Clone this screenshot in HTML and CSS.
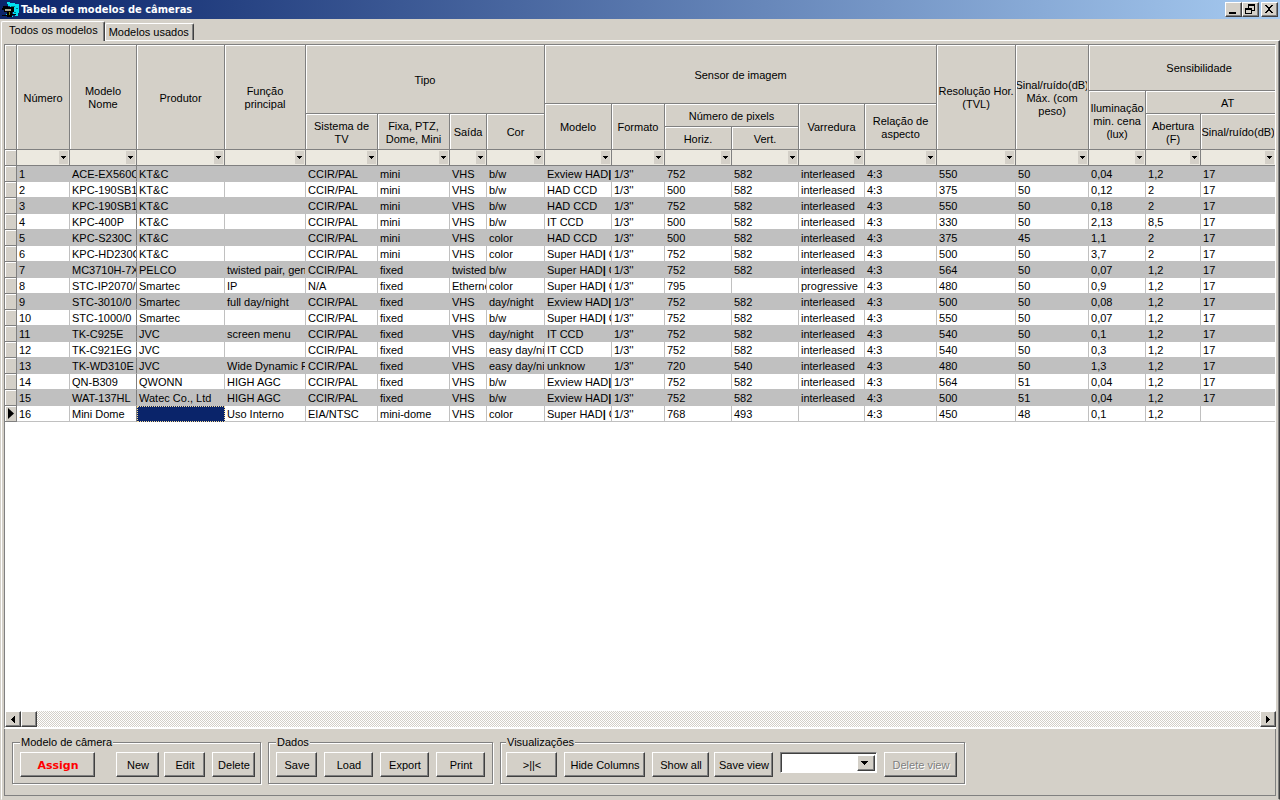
FILE: index.html
```html
<!DOCTYPE html>
<html lang="pt-BR">
<head>
<meta charset="utf-8">
<title>Tabela de modelos de câmeras</title>
<link rel="stylesheet" href="styles.css">
</head>
<body>
<header class="titlebar">
  <svg class="app-icon" width="18" height="18" viewBox="0 0 18 18" aria-hidden="true" shape-rendering="crispEdges">
    <path fill="#00e0f0" d="M5 1h3v1h5v1h4v9h-1v3h-3v-2h-2V9H8V5H6V3H5z"/>
    <path fill="#008080" d="M9 5h4v1H9zM14 7h2v1h-2zM12 11h2v1h-2z"/>
    <path fill="#000" d="M1 5h5v1h6v5h-2v2h4v1h-4v2H5v-1H0v-1h5v-3H2V9H0V7h1z"/>
    <path fill="#a8a490" d="M3 8h6v2H3z"/>
    <path fill="#808000" d="M7 11h1v3H7z"/>
    <path fill="#00e0f0" d="M4 13h1v1H4zM10 15h1v1h-1z"/>
  </svg>
  <h1 class="title">Tabela de modelos de câmeras</h1>
  <div class="window-buttons">
    <button class="win" aria-label="Minimizar"><svg width="12" height="10" viewBox="0 0 12 10" shape-rendering="crispEdges"><path d="M2 8h7v2H2z"/></svg></button>
    <button class="win" aria-label="Restaurar"><svg width="12" height="10" viewBox="0 0 12 10" shape-rendering="crispEdges"><path fill-rule="evenodd" d="M4 0h7v7H8v3H1V4h3zM5 2v2h3v2h2V2zM2 6v3h5V6z"/></svg></button>
    <button class="win close" aria-label="Fechar"><svg width="12" height="10" viewBox="0 0 12 10" shape-rendering="crispEdges"><path d="M2 1h2v1h1v1h2V2h1V1h2v1H9v1H8v1H7v2h1v1h1v1h1v1H8V8H7V7H5v1H4v1H2V8h1V7h1V6h1V4H4V3H3V2H2z"/></svg></button>
  </div>
</header>
<nav class="tabs" role="tablist">
  <button class="tab active" role="tab" aria-selected="true">Todos os modelos</button>
  <button class="tab" role="tab" aria-selected="false">Modelos usados</button>
</nav>
<main class="page">
  <div class="grid">
    <table class="cameras">
      <colgroup>
        <col class="w12"><col class="w53"><col class="w67"><col class="w88"><col class="w81"><col class="w72"><col class="w72"><col class="w37"><col class="w58"><col class="w67"><col class="w53"><col class="w67"><col class="w67"><col class="w66"><col class="w72"><col class="w79"><col class="w73"><col class="w57"><col class="w55"><col class="w75"><col class="w34">
      </colgroup>
      <thead>
        <tr class="h1">
          <th rowspan="5"></th><th rowspan="5">Número</th><th rowspan="5">Modelo Nome</th><th rowspan="5">Produtor</th><th rowspan="5">Função principal</th>
          <th rowspan="3" colspan="4">Tipo</th><th rowspan="2" colspan="6">Sensor de imagem</th>
          <th rowspan="5"><span class="cut">Resolução Hor.</span>(TVL)</th><th rowspan="5"><span class="cut">Sinal/ruído(dB)</span>Máx. (com peso)</th><th colspan="4">Sensibilidade</th>
        </tr>
        <tr class="h2"><th rowspan="4"><span class="cut">Iluminação</span>min. cena (lux)</th><th rowspan="2" colspan="3">AT</th></tr>
        <tr class="h3"><th rowspan="3">Modelo</th><th rowspan="3">Formato</th><th rowspan="2" colspan="2">Número de pixels</th><th rowspan="3">Varredura</th><th rowspan="3">Relação de aspecto</th></tr>
        <tr class="h2"><th rowspan="2">Sistema de TV</th><th rowspan="2">Fixa, PTZ, Dome, Mini</th><th rowspan="2">Saída</th><th rowspan="2">Cor</th><th rowspan="2">Abertura (F)</th><th rowspan="2"><span class="cut">Sinal/ruído(dB)</span></th><th rowspan="2"></th></tr>
        <tr class="h5"><th>Horiz.</th><th>Vert.</th></tr>
        <tr class="filters">
          <th></th>
          <td><label class="filter"><select aria-label="Filtrar Número"></select></label></td>
          <td><label class="filter"><select aria-label="Filtrar Modelo Nome"></select></label></td>
          <td><label class="filter"><select aria-label="Filtrar Produtor"></select></label></td>
          <td><label class="filter"><select aria-label="Filtrar Função principal"></select></label></td>
          <td><label class="filter"><select aria-label="Filtrar Sistema de TV"></select></label></td>
          <td><label class="filter"><select aria-label="Filtrar Fixa, PTZ, Dome, Mini"></select></label></td>
          <td><label class="filter"><select aria-label="Filtrar Saída"></select></label></td>
          <td><label class="filter"><select aria-label="Filtrar Cor"></select></label></td>
          <td><label class="filter"><select aria-label="Filtrar Modelo do sensor"></select></label></td>
          <td><label class="filter"><select aria-label="Filtrar Formato"></select></label></td>
          <td><label class="filter"><select aria-label="Filtrar Horiz."></select></label></td>
          <td><label class="filter"><select aria-label="Filtrar Vert."></select></label></td>
          <td><label class="filter"><select aria-label="Filtrar Varredura"></select></label></td>
          <td><label class="filter"><select aria-label="Filtrar Relação de aspecto"></select></label></td>
          <td><label class="filter"><select aria-label="Filtrar Resolução"></select></label></td>
          <td><label class="filter"><select aria-label="Filtrar Sinal/ruído Máx."></select></label></td>
          <td><label class="filter"><select aria-label="Filtrar Iluminação"></select></label></td>
          <td><label class="filter"><select aria-label="Filtrar Abertura"></select></label></td>
          <td><label class="filter"><select aria-label="Filtrar Sinal/ruído"></select></label></td>
          <td></td>
        </tr>
      </thead>
      <tbody>
        <tr><th></th><td>1<td>ACE-EX560C<td>KT&amp;C<td><td>CCIR/PAL<td>mini<td>VHS<td>b/w<td>Exview HAD<b>|</b> C<td>1/3''<td>752<td>582<td>interleased<td>4:3<td>550<td>50<td>0,04<td>1,2<td>17<td></tr>
        <tr><th></th><td>2<td>KPC-190SB1<td>KT&amp;C<td><td>CCIR/PAL<td>mini<td>VHS<td>b/w<td>HAD CCD<td>1/3''<td>500<td>582<td>interleased<td>4:3<td>375<td>50<td>0,12<td>2<td>17<td></tr>
        <tr><th></th><td>3<td>KPC-190SB1-<td>KT&amp;C<td><td>CCIR/PAL<td>mini<td>VHS<td>b/w<td>HAD CCD<td>1/3''<td>752<td>582<td>interleased<td>4:3<td>550<td>50<td>0,18<td>2<td>17<td></tr>
        <tr><th></th><td>4<td>KPC-400P<td>KT&amp;C<td><td>CCIR/PAL<td>mini<td>VHS<td>b/w<td>IT CCD<td>1/3''<td>500<td>582<td>interleased<td>4:3<td>330<td>50<td>2,13<td>8,5<td>17<td></tr>
        <tr><th></th><td>5<td>KPC-S230C<td>KT&amp;C<td><td>CCIR/PAL<td>mini<td>VHS<td>color<td>HAD CCD<td>1/3''<td>500<td>582<td>interleased<td>4:3<td>375<td>45<td>1,1<td>2<td>17<td></tr>
        <tr><th></th><td>6<td>KPC-HD230C<td>KT&amp;C<td><td>CCIR/PAL<td>mini<td>VHS<td>color<td>Super HAD<b>|</b> C<td>1/3''<td>752<td>582<td>interleased<td>4:3<td>500<td>50<td>3,7<td>2<td>17<td></tr>
        <tr><th></th><td>7<td>MC3710H-7X<td>PELCO<td>twisted pair, gen<td>CCIR/PAL<td>fixed<td>twisted<td>b/w<td>Super HAD<b>|</b> C<td>1/3''<td>752<td>582<td>interleased<td>4:3<td>564<td>50<td>0,07<td>1,2<td>17<td></tr>
        <tr><th></th><td>8<td>STC-IP2070/<td>Smartec<td>IP<td>N/A<td>fixed<td>Ethernet<td>color<td>Super HAD<b>|</b> C<td>1/3''<td>795<td><td>progressive<td>4:3<td>480<td>50<td>0,9<td>1,2<td>17<td></tr>
        <tr><th></th><td>9<td>STC-3010/0<td>Smartec<td>full day/night<td>CCIR/PAL<td>fixed<td>VHS<td>day/night<td>Exview HAD<b>|</b> C<td>1/3''<td>752<td>582<td>interleased<td>4:3<td>500<td>50<td>0,08<td>1,2<td>17<td></tr>
        <tr><th></th><td>10<td>STC-1000/0<td>Smartec<td><td>CCIR/PAL<td>fixed<td>VHS<td>b/w<td>Super HAD<b>|</b> C<td>1/3''<td>752<td>582<td>interleased<td>4:3<td>550<td>50<td>0,07<td>1,2<td>17<td></tr>
        <tr><th></th><td>11<td>TK-C925E<td>JVC<td>screen menu<td>CCIR/PAL<td>fixed<td>VHS<td>day/night<td>IT CCD<td>1/3''<td>752<td>582<td>interleased<td>4:3<td>540<td>50<td>0,1<td>1,2<td>17<td></tr>
        <tr><th></th><td>12<td>TK-C921EG<td>JVC<td><td>CCIR/PAL<td>fixed<td>VHS<td>easy day/ni<td>IT CCD<td>1/3''<td>752<td>582<td>interleased<td>4:3<td>540<td>50<td>0,3<td>1,2<td>17<td></tr>
        <tr><th></th><td>13<td>TK-WD310E<td>JVC<td>Wide Dynamic F<td>CCIR/PAL<td>fixed<td>VHS<td>easy day/ni<td>unknow<td>1/3''<td>720<td>540<td>interleased<td>4:3<td>480<td>50<td>1,3<td>1,2<td>17<td></tr>
        <tr><th></th><td>14<td>QN-B309<td>QWONN<td>HIGH AGC<td>CCIR/PAL<td>fixed<td>VHS<td>b/w<td>Exview HAD<b>|</b> C<td>1/3''<td>752<td>582<td>interleased<td>4:3<td>564<td>51<td>0,04<td>1,2<td>17<td></tr>
        <tr><th></th><td>15<td>WAT-137HL<td>Watec Co., Ltd<td>HIGH AGC<td>CCIR/PAL<td>fixed<td>VHS<td>b/w<td>Exview HAD<b>|</b> C<td>1/3''<td>752<td>582<td>interleased<td>4:3<td>500<td>51<td>0,04<td>1,2<td>17<td></tr>
        <tr><th><svg class="marker" width="6" height="11" viewBox="0 0 6 11" aria-hidden="true"><path d="M0 0l6 5.500-6 5.500z"/></svg></th><td>16<td>Mini Dome<td class="selected"><td>Uso Interno<td>EIA/NTSC<td>mini-dome<td>VHS<td>color<td>Super HAD<b>|</b> C<td>1/3''<td>768<td>493<td><td>4:3<td>450<td>48<td>0,1<td>1,2<td><td></tr>
      </tbody>
    </table>
  </div>
  <div class="scrollbar">
    <button class="scroll-button" aria-label="Rolar para a esquerda"><svg width="4" height="7" viewBox="0 0 4 7" shape-rendering="crispEdges"><path d="M3 0h1v7H3V6H2V5H1V4H0V3h1V2h1V1h1z"/></svg></button>
    <div class="thumb"></div>
    <button class="scroll-button end" aria-label="Rolar para a direita"><svg width="4" height="7" viewBox="0 0 4 7" shape-rendering="crispEdges"><path d="M0 0h1v1h1v1h1v1h1v1H3v1H2v1H1v1H0z"/></svg></button>
  </div>
  <div class="commands">
    <fieldset class="group">
      <legend>Modelo de câmera</legend>
      <button class="btn assign">Assign</button>
      <button class="btn b43">New</button>
      <button class="btn b41 snug">Edit</button>
      <button class="btn b43">Delete</button>
    </fieldset>
    <fieldset class="group">
      <legend>Dados</legend>
      <button class="btn b41">Save</button>
      <button class="btn b49">Load</button>
      <button class="btn b49">Export</button>
      <button class="btn b49">Print</button>
    </fieldset>
    <fieldset class="group group-views">
      <legend>Visualizações</legend>
      <button class="btn b51">&gt;||&lt;</button>
      <button class="btn b81">Hide Columns</button>
      <button class="btn b57">Show all</button>
      <button class="btn b59 snug">Save view</button>
      <label class="combo"><select aria-label="Visualização"></select></label>
      <button class="btn b73" disabled>Delete view</button>
    </fieldset>
  </div>
</main>
</body>
</html>
```
FILE: styles.css
```css
:root {
  --face: #d4d0c8;
  --shadow: #808080;
  --dark: #404040;
  --line: #c0c0c0;
  --black: linear-gradient(#000, #000);
}

* { box-sizing: border-box; }

body {
  margin: 0;
  height: 100vh;
  display: flex;
  flex-direction: column;
  overflow: hidden;
  background: var(--face);
  color: #000;
  font: 11px/13px "Liberation Sans", Arial, sans-serif;
}

button, select {
  font: inherit;
  color: inherit;
  margin: 0;
  padding: 0;
  border-radius: 0;
}

/* Title bar */
.titlebar {
  flex: none;
  display: flex;
  align-items: center;
  height: 19px;
  padding: 0 2px;
  background: linear-gradient(90deg, #0a246a, #a6caf0);
}
.app-icon { flex: none; }
.title {
  margin: 0 auto 0 1px;
  color: #fff;
  font: bold 11px/16px "DejaVu Sans Condensed", "Open Sans", sans-serif;
}
.window-buttons { display: flex; }
.win, .btn, .scroll-button, .thumb {
  background: var(--face);
  border: 1px solid;
  border-color: #fff var(--dark) var(--dark) #fff;
  box-shadow: inset -1px -1px var(--shadow);
}
.win {
  display: flex;
  width: 17px;
  height: 15px;
  padding: 1px;
}
.close { margin-left: 2px; }

/* Tabs */
.tabs {
  flex: none;
  display: flex;
  align-items: flex-end;
  height: 21px;
  padding-left: 1px;
}
.tab {
  height: 17px;
  padding: 0 4px 0 3px;
  background: var(--face);
  border: solid;
  border-width: 1px 1px 0;
  border-color: #fff var(--dark) #fff #fff;
  border-radius: 2px 2px 0 0;
  box-shadow: inset -1px 0 var(--shadow);
  white-space: nowrap;
}
.tab.active {
  height: 20px;
  padding: 0 6px 2px 7px;
  margin-bottom: -1px;
  z-index: 1;
}

/* Tab page */
.page {
  flex: 1;
  min-height: 0;
  display: flex;
  flex-direction: column;
  margin-left: 1px;
  padding: 3px 3px 3px 2px;
  border: 1px solid;
  border-color: #fff var(--dark) var(--face) #fff;
  box-shadow: inset -1px 0 var(--shadow);
}
.grid {
  flex: 1;
  min-height: 0;
  overflow: hidden;
  background: #fff;
  border: solid;
  border-width: 1px 1px 0 1px;
  border-color: var(--shadow) #fff #fff var(--shadow);
}
.cameras {
  table-layout: fixed;
  width: 1305px;
  border-spacing: 0;
}
.w12 { width: 12px; } .w34 { width: 34px; } .w37 { width: 37px; }
.w53 { width: 53px; } .w55 { width: 55px; } .w57 { width: 57px; }
.w58 { width: 58px; } .w66 { width: 66px; } .w67 { width: 67px; }
.w72 { width: 72px; } .w73 { width: 73px; } .w75 { width: 75px; }
.w79 { width: 79px; } .w81 { width: 81px; } .w88 { width: 88px; }

.cameras th {
  padding: 0 1px;
  background: var(--face);
  border: solid var(--shadow);
  border-width: 0 1px 1px 0;
  box-shadow: inset 1px 1px #fff;
  font-weight: normal;
  text-align: center;
  vertical-align: middle;
}
.cameras thead th { padding-top: 2px; }
.h1 { height: 46px; }
.h2 { height: 13px; }
.h3 { height: 10px; }
.h5 { height: 23px; }
.cut {
  display: flex;
  justify-content: center;
  overflow: hidden;
  white-space: nowrap;
}

.filters { height: 16px; }
.filters td {
  padding: 0;
  background: #ece9e0;
  border: solid var(--shadow);
  border-width: 0 1px 1px 0;
}
.filter {
  display: flex;
  height: 15px;
  padding: 1px;
}
.filter select {
  flex: 1;
  min-width: 0;
  appearance: none;
  border: 0;
  background: none;
}
.filter::after {
  content: "";
  width: 9px;
  background:
    var(--black) 2px 5px / 5px 1px no-repeat,
    var(--black) 3px 6px / 3px 1px no-repeat,
    var(--black) 4px 7px / 1px 1px no-repeat,
    var(--face);
}

.cameras tbody tr { height: 16px; }
.cameras tbody tr:nth-child(odd) { background: var(--line); }
.cameras tbody td {
  height: 16px;
  padding: 2px 0 0 2px;
  border: solid var(--line);
  border-width: 0 1px 1px 0;
  white-space: nowrap;
  overflow: hidden;
}
.cameras tbody td:nth-child(3) { border-right-color: var(--shadow); }
.cameras tbody td.selected {
  background: #0a246a;
  border: 1px dotted #f5db95;
}
.marker { display: block; margin: auto; }

/* Horizontal scroll bar */
.scrollbar {
  flex: none;
  display: flex;
  height: 18px;
  border-left: 1px solid var(--shadow);
  border-bottom: 2px solid #fff;
  background: repeating-conic-gradient(#fff 0 25%, var(--face) 0 50%) 0 0 / 2px 2px;
}
.scroll-button, .thumb {
  width: 16px;
  height: 16px;
}
.scroll-button {
  display: flex;
  align-items: center;
  justify-content: center;
}
.end { margin-left: auto; }

/* Command groups */
.commands {
  flex: none;
  display: flex;
  gap: 7px;
  height: 67px;
  padding: 7px 7px 0;
  border: solid var(--shadow);
  border-width: 0 1px 1px;
}
.group {
  display: flex;
  gap: 7px;
  min-width: 0;
  height: 48px;
  margin: 0;
  padding: 3px 5px 0 7px;
  border: 1px solid var(--shadow);
  box-shadow: 1px 1px #fff, inset 1px 1px #fff;
}
.group + .group { padding-right: 7px; }
.group.group-views { padding-left: 5px; }
.group legend {
  padding: 0 1px;
  background: var(--face);
}
.btn {
  height: 25px;
  padding: 1px 0 0 1px;
  white-space: nowrap;
}
.btn:disabled {
  color: var(--shadow);
  text-shadow: 1px 1px #fff;
}
.assign {
  width: 75px;
  margin-right: 14px;
  color: #f00;
  font: bold 11px/13px "DejaVu Sans", sans-serif;
}
.b41 { width: 41px; } .b43 { width: 43px; } .b49 { width: 49px; }
.b51 { width: 51px; } .b57 { width: 57px; } .b59 { width: 59px; }
.b73 { width: 73px; } .b81 { width: 81px; }
.snug { margin-left: -2px; }

.combo {
  display: flex;
  width: 97px;
  height: 21px;
  background: #fff;
  border: 1px solid;
  border-color: var(--shadow) #fff #fff var(--shadow);
  box-shadow: inset 1px 1px var(--dark);
  padding: 2px 1px 1px 2px;
}
.combo select {
  flex: 1;
  min-width: 0;
  appearance: none;
  border: 0;
  background: none;
}
.combo::after {
  content: "";
  width: 16px;
  border: 1px solid;
  border-color: #fff var(--dark) var(--dark) #fff;
  box-shadow: inset -1px -1px var(--shadow);
  background:
    var(--black) 3px 5px / 7px 1px no-repeat,
    var(--black) 4px 6px / 5px 1px no-repeat,
    var(--black) 5px 7px / 3px 1px no-repeat,
    var(--black) 6px 8px / 1px 1px no-repeat,
    var(--face);
}
```
